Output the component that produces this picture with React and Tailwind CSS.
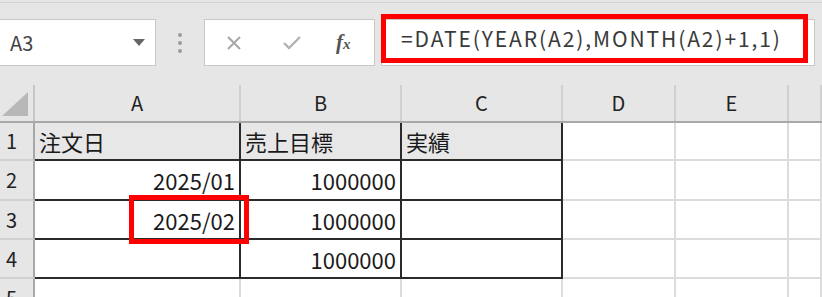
import React from "react";

const cols = [
  { key: "A", w: "w-[206px]" },
  { key: "B", w: "w-[161px]" },
  { key: "C", w: "w-[161px]" },
  { key: "D", w: "w-[113px]" },
  { key: "E", w: "w-[113px]" },
  { key: "", w: "flex-1" },
];

const rows = [
  { n: 1, h: "h-[38px]", cells: ["注文日", "売上目標", "実績"], head: true },
  { n: 2, h: "h-[40px]", cells: ["2025/01", "1000000", ""] },
  { n: 3, h: "h-[39px]", cells: ["2025/02", "1000000", ""] },
  { n: 4, h: "h-[39px]", cells: ["", "1000000", ""] },
  { n: 5, h: "h-[39px]", cells: ["", "", ""] },
];

function Cell({ row, ci, text }) {
  const inTable = ci < 3 && row.n <= 4;
  const right = ci <= 2 && row.n <= 4 ? "border-r-[#2b2b2b]" : "border-r-[#dcdcdc]";
  const bottom = inTable ? "border-b-[#2b2b2b]" : "border-b-[#dcdcdc]";
  const bg = row.head && inTable ? "bg-[#e7e7e7]" : "bg-white";
  const align = row.head ? "justify-start pl-[4px]" : "justify-end pr-[4px]";
  return (
    <div className={`relative box-border ${cols[ci].w} h-full flex items-center ${align} border-r-2 border-b-2 ${right} ${bottom} ${bg}`}>
      <span className="text-[22px] text-[#1a1a1a] leading-none">{text}</span>
      {row.n === 3 && ci === 0 && (
        <div className="absolute z-10 left-[94px] -top-[6px] w-[120px] h-[49px] border-[5px] border-[#ff0000]" />
      )}
    </div>
  );
}

export default function App() {
  return (
    <div className="w-[822px] h-[297px] overflow-hidden bg-[#e6e6e6] font-['Noto_Sans_CJK_JP',sans-serif]">
      {/* formula bar */}
      <div className="h-[83px] border-t border-[#d2d2d2] mt-[2px] relative">
        <div className="flex items-start pt-[16px]">
          <div className="w-[157px] h-[47px] -ml-px bg-white border border-[#c8c8c8] flex items-center justify-between pl-[10px] pr-[10px]">
            <span className="text-[20px] text-[#444]">A3</span>
            <svg width="12" height="8" viewBox="0 0 12 8"><path d="M0 0h12L6 7z" fill="#666" /></svg>
          </div>
          <div className="w-[48px] h-[47px] flex flex-col items-center justify-center gap-[4px]">
            <span className="w-[4px] h-[4px] rounded-full bg-[#9c9c9c]" />
            <span className="w-[4px] h-[4px] rounded-full bg-[#9c9c9c]" />
            <span className="w-[4px] h-[4px] rounded-full bg-[#9c9c9c]" />
          </div>
          <div className="w-[171px] h-[47px] bg-white border border-[#c8c8c8] flex items-center">
            <svg className="ml-[21px]" width="16" height="16" viewBox="0 0 16 16"><path d="M2 2l12 12M14 2L2 14" stroke="#a8a8a8" strokeWidth="2" /></svg>
            <svg className="ml-[40px]" width="20" height="16" viewBox="0 0 20 16"><path d="M2 8l5 5L18 2" stroke="#b4b4b4" strokeWidth="2.4" fill="none" /></svg>
            <span className="ml-[34px] font-['Liberation_Serif',serif] italic font-bold text-[21px] text-[#555] leading-none">
              f<span className="text-[15px]">x</span>
            </span>
          </div>
          <div className="ml-[6px] w-[434px] h-[47px] bg-white border border-[#c8c8c8] relative">
            <div className="absolute z-10 -left-px -top-[6px] w-[427px] h-[49px] border-[5px] border-[#ff0000] flex items-center pl-[15px]">
              <span className="text-[21px] text-[#3a3a3a] leading-none tracking-[1.9px]">=DATE(YEAR(A2),MONTH(A2)+1,1)</span>
            </div>
          </div>
        </div>
      </div>
      {/* column headers */}
      <div className="flex h-[38px] border-b-2 border-[#a8a8a8]">
        <div className="w-[35px] h-full border-r-2 border-[#c6c6c6] relative">
          <svg className="absolute right-[5px] bottom-[5px]" width="26" height="24" viewBox="0 0 26 24"><path d="M26 0V24H0z" fill="#b8b8b8" /></svg>
        </div>
        {cols.map((c, i) => (
          <div key={i} className={`box-border ${c.w} h-full border-r-2 border-[#d0d0d0] flex items-center justify-center`}>
            <span className="text-[20px] text-[#222] leading-none">{c.key}</span>
          </div>
        ))}
      </div>
      {/* rows */}
      {rows.map((row) => (
        <div key={row.n} className={`flex ${row.h}`}>
          <div className="w-[35px] h-full box-border border-r-2 border-b-2 border-r-[#a8a8a8] border-b-[#d0d0d0] flex items-center pl-[6px]">
            <span className="text-[20px] text-[#222] leading-none">{row.n}</span>
          </div>
          {cols.map((c, ci) => (
            <Cell key={ci} row={row} ci={ci} text={row.cells[ci] || ""} />
          ))}
        </div>
      ))}
    </div>
  );
}
